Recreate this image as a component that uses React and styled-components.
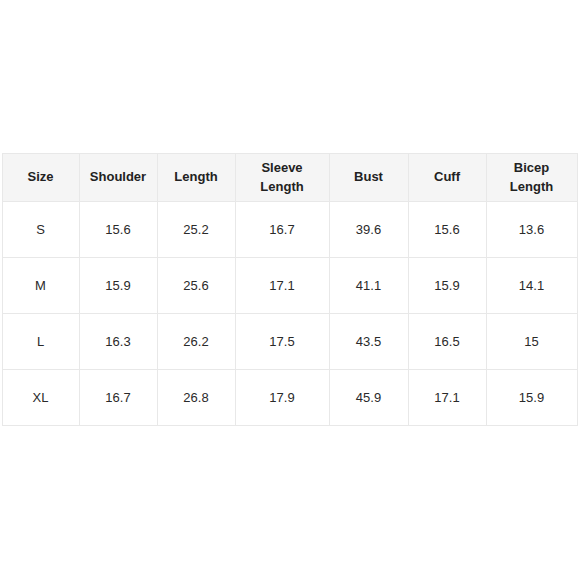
import React from 'react';
import styled, { createGlobalStyle } from 'styled-components';

const GlobalStyle = createGlobalStyle`
  html, body {
    margin: 0;
    padding: 0;
    background: #ffffff;
    font-family: 'Liberation Sans', Arial, sans-serif;
  }
`;

const Page = styled.div`
  display: flex;
  justify-content: center;
  align-items: center;
  width: 580px;
  height: 580px;
`;

const Table = styled.table`
  border-collapse: collapse;
  table-layout: fixed;
  width: 575px;
  margin-left: -1px;
  margin-top: -1px;
  font-size: 13px;
  color: #222;
`;

const HeadCell = styled.th`
  width: ${(props) => props.$w}px;
  height: 48px;
  padding: 0 4px 2px;
  box-sizing: border-box;
  background: #f5f5f5;
  border: 1px solid #e8e8e8;
  font-weight: bold;
  line-height: 19px;
  text-align: center;
  vertical-align: middle;
`;

const Cell = styled.td`
  height: 55px;
  padding: 0;
  border: 1px solid #e8e8e8;
  text-align: center;
  vertical-align: middle;
  color: #2a2a2a;
`;

const columns = [
  { label: 'Size', width: 77 },
  { label: 'Shoulder', width: 78 },
  { label: 'Length', width: 78 },
  { label: 'Sleeve Length', width: 94 },
  { label: 'Bust', width: 79 },
  { label: 'Cuff', width: 78 },
  { label: 'Bicep Length', width: 91 },
];

const rows = [
  ['S', '15.6', '25.2', '16.7', '39.6', '15.6', '13.6'],
  ['M', '15.9', '25.6', '17.1', '41.1', '15.9', '14.1'],
  ['L', '16.3', '26.2', '17.5', '43.5', '16.5', '15'],
  ['XL', '16.7', '26.8', '17.9', '45.9', '17.1', '15.9'],
];

const App = () => (
  <Page>
    <GlobalStyle />
    <Table>
      <thead>
        <tr>
          {columns.map((c) => (
            <HeadCell key={c.label} $w={c.width}>
              {c.label.includes(' ') ? (
                <>
                  {c.label.split(' ')[0]}
                  <br />
                  {c.label.split(' ')[1]}
                </>
              ) : (
                c.label
              )}
            </HeadCell>
          ))}
        </tr>
      </thead>
      <tbody>
        {rows.map((r) => (
          <tr key={r[0]}>
            {r.map((v, i) => (
              <Cell key={i}>{v}</Cell>
            ))}
          </tr>
        ))}
      </tbody>
    </Table>
  </Page>
);

export default App;
